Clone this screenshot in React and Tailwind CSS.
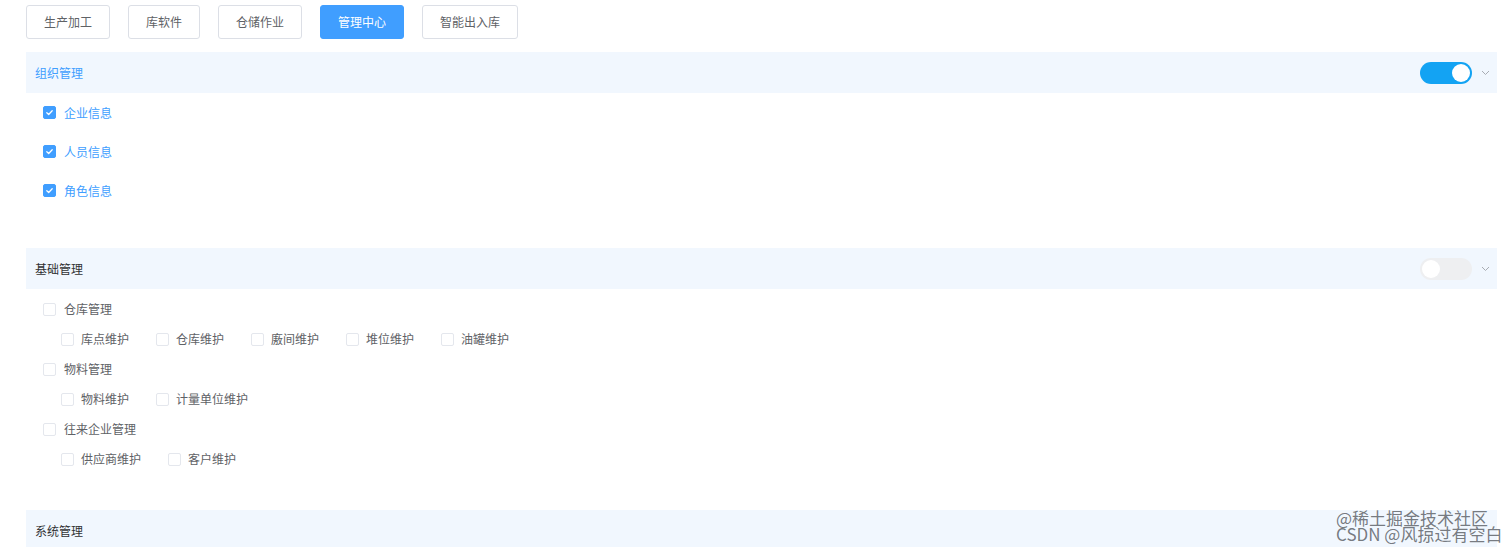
import { useState } from 'react';

const tabs = ['生产加工', '库软件', '仓储作业', '管理中心', '智能出入库'];

const basicGroups = [
  { name: '仓库管理', children: ['库点维护', '仓库维护', '廒间维护', '堆位维护', '油罐维护'] },
  { name: '物料管理', children: ['物料维护', '计量单位维护'] },
  { name: '往来企业管理', children: ['供应商维护', '客户维护'] },
];

const Check = ({ checked }) => (
  <span
    className={`w-[13px] h-[13px] rounded-[2px] border flex items-center justify-center shrink-0 ${
      checked ? 'bg-[#409eff] border-[#409eff]' : 'bg-white border-[#e4e7ed]'
    }`}
  >
    {checked && (
      <svg width="9" height="9" viewBox="0 0 10 10" fill="none">
        <path d="M2 5.2 4.1 7.2 8 3" stroke="white" strokeWidth="1.4" strokeLinecap="round" strokeLinejoin="round" />
      </svg>
    )}
  </span>
);

const Chevron = () => (
  <svg width="9" height="6" viewBox="0 0 9 6" fill="none" className="ml-[9px]">
    <path d="M1 1l3.5 3.5L8 1" stroke="#a8acb3" strokeWidth="1" />
  </svg>
);

const Toggle = ({ on }) => (
  <span
    className={`w-[52px] h-[22px] rounded-full flex items-center px-[2px] ${
      on ? 'bg-[#13a3f3] justify-end' : 'bg-[#eeeff1] justify-start'
    }`}
  >
    <span className="w-[18px] h-[18px] rounded-full bg-white" />
  </span>
);

const SectionHeader = ({ title, on, active }) => (
  <div className="h-[41px] bg-[#f1f7fe] flex items-center justify-between pl-[9px] pr-[7px]">
    <span className={active ? 'text-[#409eff]' : 'text-[#303133]'}>{title}</span>
    {on !== undefined && (
      <div className="flex items-center">
        <Toggle on={on} />
        <Chevron />
      </div>
    )}
  </div>
);

const App = () => {
  const [activeTab] = useState('管理中心');

  return (
    <div
      className="relative w-[1512px] h-[547px] overflow-hidden bg-white text-[12px] pl-[26px] pr-[15px] pt-[5px]"
      style={{ fontFamily: '"Noto Sans CJK SC", "Noto Sans", sans-serif' }}
    >
      {/* Tabs */}
      <div className="flex gap-[18px]">
        {tabs.map((t) => (
          <button
            key={t}
            className={`h-[34px] px-[17px] rounded-[3px] border ${
              t === activeTab
                ? 'bg-[#409eff] border-[#409eff] text-white'
                : 'bg-white border-[#dcdfe6] text-[#606266]'
            }`}
          >
            {t}
          </button>
        ))}
      </div>

      {/* 组织管理 */}
      <div className="mt-[13px]">
        <SectionHeader title="组织管理" on active />
        <div className="pl-[17px] pb-[38px]">
          {['企业信息', '人员信息', '角色信息'].map((n) => (
            <div key={n} className="h-[39px] flex items-center gap-[8px] text-[#409eff]">
              <Check checked />
              <span>{n}</span>
            </div>
          ))}
        </div>
      </div>

      {/* 基础管理 */}
      <div>
        <SectionHeader title="基础管理" on={false} />
        <div className="pl-[17px] pt-[5px] pb-[36px] text-[#606266]">
          {basicGroups.map((g) => (
            <div key={g.name}>
              <div className="h-[30px] flex items-center gap-[8px]">
                <Check />
                <span>{g.name}</span>
              </div>
              <div className="h-[30px] flex items-center pl-[18px]">
                {g.children.map((c) => (
                  <div key={c} className="flex items-center gap-[7px] mr-[27px]">
                    <Check />
                    <span>{c}</span>
                  </div>
                ))}
              </div>
            </div>
          ))}
        </div>
      </div>

      {/* 系统管理 */}
      <SectionHeader title="系统管理" />

      {/* watermark */}
      <div className="absolute left-[1336px] top-[508px] w-[170px] h-[39px] text-[17px] leading-[20px] text-[#55595f]/80 pointer-events-none">
        <span className="absolute left-0 top-0 whitespace-nowrap">@稀土掘金技术社区</span>
        <span className="absolute left-0 top-[16px] whitespace-nowrap">CSDN @风掠过有空白</span>
      </div>
    </div>
  );
};

export default App;
